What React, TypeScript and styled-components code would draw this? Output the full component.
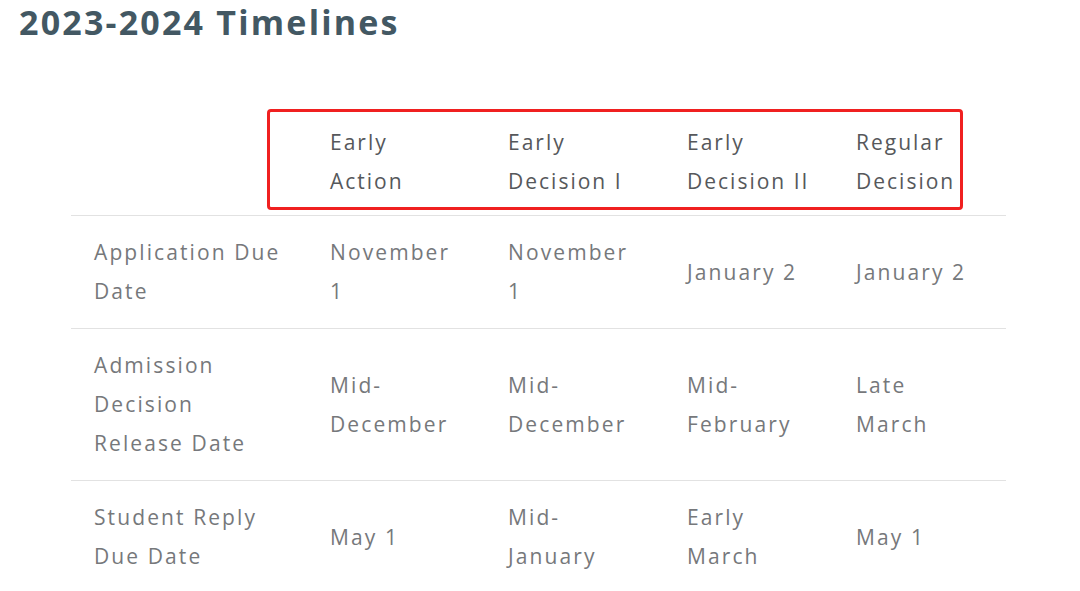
import React from "react";
import styled, { createGlobalStyle } from "styled-components";

const Global = createGlobalStyle`
  html, body { margin: 0; padding: 0; background: #ffffff; }
  body { font-family: "Open Sans", "Liberation Sans", sans-serif; }
`;

const Page = styled.div`
  width: 1080px;
  height: 591px;
  overflow: hidden;
  position: relative;
`;

const Title = styled.h2`
  margin: 0;
  padding: 0 0 0 19px;
  font-family: "Open Sans", sans-serif;
  font-weight: 700;
  font-size: 34px;
  line-height: 44px;
  color: #435863;
  letter-spacing: 2.2px;
`;

const TableWrap = styled.div`
  position: relative;
  margin: 60px 0 0 71px;
  width: 935px;
`;

const Table = styled.table`
  width: 935px;
  border-collapse: collapse;
  table-layout: fixed;
`;

const Th = styled.th`
  text-align: left;
  vertical-align: middle;
  font-weight: 400;
  font-size: 21px;
  line-height: 39px;
  color: #56585b;
  padding: 19px 6px 14px 23px;
  letter-spacing: 2px;
  white-space: nowrap;
  border-bottom: 1px solid #e2e2e2;
`;

const Td = styled.td`
  text-align: left;
  vertical-align: middle;
  font-size: 21px;
  line-height: 39px;
  color: #76787b;
  padding: 17px 6px 17px 23px;
  letter-spacing: 2.1px;
  white-space: nowrap;
`;

const Row = styled.tr<{ $last?: boolean }>`
  & > td { border-bottom: ${(p) => (p.$last ? "none" : "1px solid #e2e2e2")}; }
`;

const Highlight = styled.div`
  position: absolute;
  left: 196px;
  top: 5px;
  width: 690px;
  height: 95px;
  border: 3px solid #f02020;
  border-radius: 4px;
  pointer-events: none;
`;

const widths = [236, 178, 179, 169, 173];

const heads = [
  ["Early", "Action"],
  ["Early", "Decision I"],
  ["Early", "Decision II"],
  ["Regular", "Decision"],
];

const rows: string[][][] = [
  [["Application Due", "Date"], ["November", "1"], ["November", "1"], ["January 2"], ["January 2"]],
  [["Admission", "Decision", "Release Date"], ["Mid-", "December"], ["Mid-", "December"], ["Mid-", "February"], ["Late", "March"]],
  [["Student Reply", "Due Date"], ["May 1"], ["Mid-", "January"], ["Early", "March"], ["May 1"]],
];

const Lines = ({ lines }: { lines: string[] }) => (
  <>
    {lines.map((l, i) => (
      <React.Fragment key={i}>
        {i > 0 && <br />}
        {l}
      </React.Fragment>
    ))}
  </>
);

export default function App() {
  return (
    <Page>
      <Global />
      <Title>2023-2024 Timelines</Title>
      <TableWrap>
        <Table>
          <colgroup>
            {widths.map((w, i) => (
              <col key={i} style={{ width: w }} />
            ))}
          </colgroup>
          <thead>
            <tr>
              <Th />
              {heads.map((h, i) => (
                <Th key={i}>
                  <Lines lines={h} />
                </Th>
              ))}
            </tr>
          </thead>
          <tbody>
            {rows.map((r, i) => (
              <Row key={i} $last={i === rows.length - 1}>
                {r.map((c, j) => (
                  <Td key={j}>
                    <Lines lines={c} />
                  </Td>
                ))}
              </Row>
            ))}
          </tbody>
        </Table>
        <Highlight />
      </TableWrap>
    </Page>
  );
}
